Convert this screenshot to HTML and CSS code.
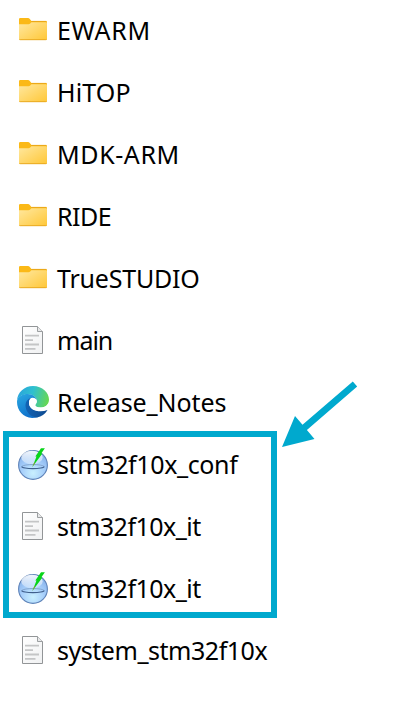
FILE: index.html
```html
<!DOCTYPE html>
<html lang="en">
<head>
<meta charset="utf-8">
<title>Files</title>
<link rel="stylesheet" href="styles.css">
</head>
<body>
<svg class="defs" aria-hidden="true">
  <defs>
    <linearGradient id="fold" x1="0" y1="0" x2="1" y2="1"><stop offset="0" stop-color="#ffe8a0"/><stop offset="1" stop-color="#ffc737"/></linearGradient>
    <linearGradient id="paper" x1="0" y1="0" x2="1" y2="1"><stop offset="0" stop-color="#fff"/><stop offset="1" stop-color="#f0f1f2"/></linearGradient>
    <linearGradient id="edge-top" x1="0" y1=".4" x2="1" y2=".6"><stop offset="0" stop-color="#2aa5dc"/><stop offset=".45" stop-color="#2fc0cf"/><stop offset="1" stop-color="#68d84f"/></linearGradient>
    <linearGradient id="edge-left" x1="0" y1="0" x2=".5" y2="1"><stop offset="0" stop-color="#2aa9e2"/><stop offset="1" stop-color="#0f70cb"/></linearGradient>
    <linearGradient id="edge-low" x1="0" y1="0" x2="1" y2="0"><stop offset="0" stop-color="#1263b4"/><stop offset="1" stop-color="#0f4a90"/></linearGradient>
    <radialGradient id="ball" cx=".5" cy=".78" r=".8"><stop offset="0" stop-color="#c9f0ff"/><stop offset=".5" stop-color="#a6cefa"/><stop offset="1" stop-color="#7fabe8"/></radialGradient>
    <linearGradient id="shine" x1="0" y1="0" x2="0" y2="1"><stop offset="0" stop-color="#fff" stop-opacity=".9"/><stop offset="1" stop-color="#fff" stop-opacity=".3"/></linearGradient>
    <symbol id="folder" viewBox="0 0 32 32">
      <path d="M2 10V5.3Q2 4 3.3 4H11q1 0 1.6.8L14.4 7H29q1 0 1 1v5H2z" fill="#fbb917"/>
      <path d="M2 10.3h9.5q1 0 1.7-.8l1.2-1.3H29q1 0 1 1V25q0 1-1 1H3q-1 0-1-1z" fill="url(#fold)"/>
      <path d="M2.3 25.4q.3.3.9.3h25.6q.6 0 .9-.3M14.3 7.4h15" fill="none" stroke="#e7a51c" stroke-width=".9"/>
    </symbol>
    <symbol id="doc" viewBox="0 0 32 32">
      <path d="M5.5 2.5h15l5 5v22h-20z" fill="url(#paper)" stroke="#929597"/>
      <path d="M20.5 2.5v5h5" fill="#e8e9ea" stroke="#929597" stroke-width=".9"/>
      <path d="M8 11.7h14M8 16.1h8M8 20.5h14M8 24.9h10.5" stroke="#c4c5c6" stroke-width="1.8"/>
    </symbol>
    <symbol id="edge" viewBox="0 0 32 32">
      <path d="M.1 14.5C.4 6.3 7.4 0 16 0 25.5 0 32 6.7 32 13.4c0 4.9-3.7 8.2-8.4 8.2-3.5 0-5.4-1.1-5.4-2.3 0-1 1.6-1.6 1.6-4.2 0-3.4-3.7-6.8-8.4-6.8C5.5 8.3 1 11 .1 14.5z" fill="url(#edge-top)"/>
      <path d="M.1 14.5C1 10.5 5.5 8 10.7 8c5.4 0 9.1 3.5 9.1 7.2 0-2-2-3.5-4.4-3.5-2.7 0-5.1 3.2-5.1 7.2 0 6.4 5.3 10.5 10.7 12C9.1 35 0 26 0 16z" fill="url(#edge-left)"/>
      <path d="M13.8 12.1c-3.8 1.3-5.7 4.7-5.2 8.7.7 6.2 5.9 10.6 11.5 10.6 4.4-.7 8-3.4 10.1-7 .3-.6-.2-1.1-.9-.7-7.2 3.2-16.3.5-17.2-6-.3-2.1.4-4 1.7-5.6z" fill="url(#edge-low)"/>
      <path d="M12.9 13.4c2.4-2.2 6.9-1.1 6.9 1.9 0 2.3-1.6 2.9-1.6 4 0 1.5 2.5 2.3 5.4 2.3 3.4 0 6.3-1.6 7.6-4.1l.8 4.5-1.5 1.9c-7.8 3-17.5.7-18.4-5.7-.3-1.9.1-3.5.8-4.8z" fill="#fff"/>
    </symbol>
    <symbol id="globe" viewBox="0 0 32 32">
      <circle cx="16" cy="17" r="14.4" fill="url(#ball)" stroke="#5f83b8" stroke-width="1.1"/>
      <ellipse cx="15" cy="9.5" rx="10.7" ry="6.7" fill="url(#shine)"/>
      <path d="M4.8 18.5c2-2.6 20.5-2.6 22.3 0" fill="none" stroke="#7f9fc9" stroke-width=".9"/>
      <path d="M4.8 18.5c-.4 2.8 22.7 2.8 22.3 0" fill="none" stroke="#3f5f8c" stroke-width="1.1"/>
      <path d="M15.5 18.7 19.5 8.6h-1.2L24 .2h3.9L24.2 5.6h1.2z" fill="#08d518"/>
      <path d="m15 19.3 2.3-5.1 1.1.6z" fill="#8b9b3c"/>
    </symbol>
  </defs>
</svg>
<main class="files">
  <div class="row"><svg class="icon"><use href="#folder"/></svg><span class="name ewarm">EWARM</span></div>
  <div class="row"><svg class="icon"><use href="#folder"/></svg><span class="name hitop">HiTOP</span></div>
  <div class="row"><svg class="icon"><use href="#folder"/></svg><span class="name mdk">MDK-ARM</span></div>
  <div class="row"><svg class="icon"><use href="#folder"/></svg><span class="name ride">RIDE</span></div>
  <div class="row"><svg class="icon"><use href="#folder"/></svg><span class="name studio">TrueSTUDIO</span></div>
  <div class="row"><svg class="icon"><use href="#doc"/></svg><span class="name source">main</span></div>
  <div class="row"><svg class="icon"><use href="#edge"/></svg><span class="name notes">Release_Notes</span></div>
  <div class="row"><svg class="icon"><use href="#globe"/></svg><span class="name conf">stm32f10x_conf</span></div>
  <div class="row"><svg class="icon"><use href="#doc"/></svg><span class="name it">stm32f10x_it</span></div>
  <div class="row"><svg class="icon"><use href="#globe"/></svg><span class="name it">stm32f10x_it</span></div>
  <div class="row"><svg class="icon"><use href="#doc"/></svg><span class="name system">system_stm32f10x</span></div>
</main>
<div class="highlight"></div>
<svg class="arrow" viewBox="0 0 80 70"><path d="M2 67 15 36l7.5 8.7L72.8 1.5l4.4 5.1-50.3 43.4 7.6 9z" fill="#00a9ce"/></svg>
</body>
</html>
```

FILE: styles.css
```css
body {
  position: relative;
  width: 416px;
  height: 708px;
  margin: 0;
  overflow: hidden;
  background: #fff;
  color: #000;
  font: 25px/34px "Noto Sans", "Open Sans", sans-serif;
}

.defs {
  position: absolute;
  width: 0;
  height: 0;
}

.files {
  display: flex;
  flex-direction: column;
}

.row {
  display: flex;
  align-items: center;
  gap: 8px;
  height: 62px;
  padding-left: 17px;
  box-sizing: border-box;
}

.icon {
  flex: none;
  width: 32px;
  height: 32px;
  margin-top: -2px;
}

.name {
  margin-top: -2px;
  white-space: nowrap;
}

.ewarm { letter-spacing: 0.7px; }
.hitop { letter-spacing: 0.15px; }
.mdk { letter-spacing: 0.6px; }
.ride { letter-spacing: -0.5px; }
.studio { letter-spacing: -0.2px; }
.source { letter-spacing: -1px; }
.notes { letter-spacing: -0.1px; }
.conf { letter-spacing: -0.38px; }
.it { letter-spacing: -0.52px; }
.system { letter-spacing: -0.47px; }

.highlight {
  position: absolute;
  left: 3px;
  top: 431px;
  width: 274px;
  height: 187px;
  box-sizing: border-box;
  border: 6px solid #00a9ce;
}

.arrow {
  position: absolute;
  left: 280px;
  top: 380px;
  width: 80px;
  height: 70px;
}
```
